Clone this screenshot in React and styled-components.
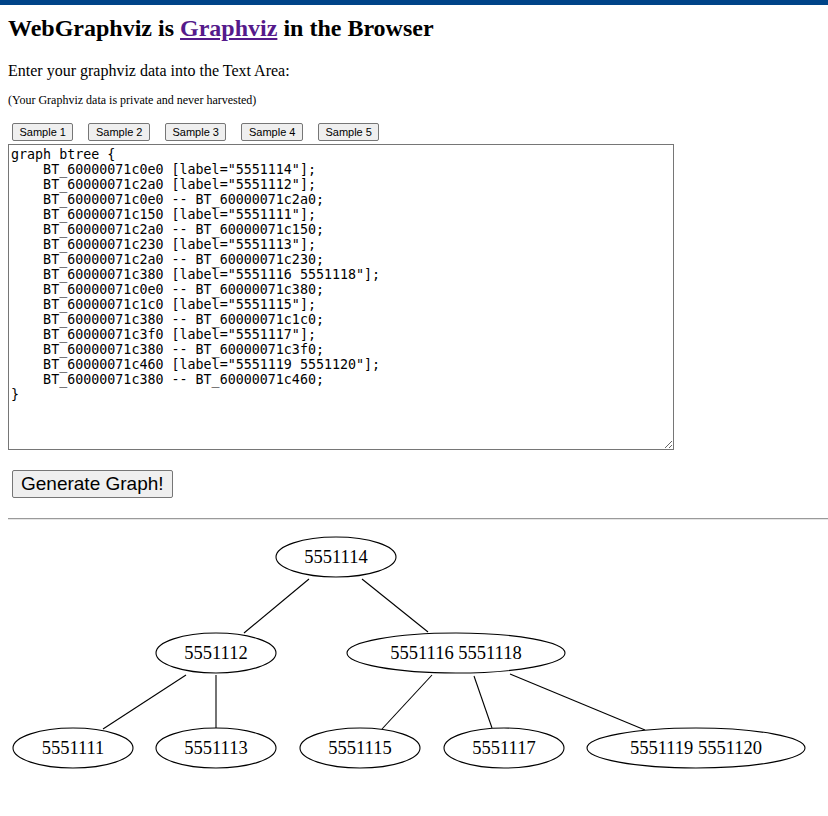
import React from "react";
import styled, { createGlobalStyle } from "styled-components";

const GlobalStyle = createGlobalStyle`
  html, body {
    margin: 0;
    padding: 0;
    background: #fff;
  }
  body {
    font-family: "Liberation Serif", "Times New Roman", serif;
    color: #000;
  }
`;

const graphSource = `graph btree {
    BT_60000071c0e0 [label="5551114"];
    BT_60000071c2a0 [label="5551112"];
    BT_60000071c0e0 -- BT_60000071c2a0;
    BT_60000071c150 [label="5551111"];
    BT_60000071c2a0 -- BT_60000071c150;
    BT_60000071c230 [label="5551113"];
    BT_60000071c2a0 -- BT_60000071c230;
    BT_60000071c380 [label="5551116 5551118"];
    BT_60000071c0e0 -- BT_60000071c380;
    BT_60000071c1c0 [label="5551115"];
    BT_60000071c380 -- BT_60000071c1c0;
    BT_60000071c3f0 [label="5551117"];
    BT_60000071c380 -- BT_60000071c3f0;
    BT_60000071c460 [label="5551119 5551120"];
    BT_60000071c380 -- BT_60000071c460;
}`;

// node centres in page coordinates, shifted into the svg below
const nodes = [
  { label: "5551114", x: 336, y: 557, rx: 60 },
  { label: "5551112", x: 216, y: 653, rx: 60 },
  { label: "5551116 5551118", x: 456, y: 653, rx: 109 },
  { label: "5551111", x: 73, y: 748, rx: 60 },
  { label: "5551113", x: 216, y: 748, rx: 60 },
  { label: "5551115", x: 360, y: 748, rx: 60 },
  { label: "5551117", x: 504, y: 748, rx: 60 },
  { label: "5551119 5551120", x: 696, y: 748, rx: 109 },
];

const edges = [
  [309, 579, 244, 633],
  [362, 579, 428, 632],
  [186, 675, 103, 729],
  [216, 675, 216, 728],
  [432, 675, 382, 729],
  [474, 676, 492, 728],
  [510, 674, 645, 730],
];

const Page = () => {
  return (
    <>
      <GlobalStyle />
      <TopBar />
      <Content>
        <Title>
          WebGraphviz is <TitleLink href="#">Graphviz</TitleLink> in the Browser
        </Title>
        <Intro>Enter your graphviz data into the Text Area:</Intro>
        <Note>(Your Graphviz data is private and never harvested)</Note>
        <SampleBar>
          {[1, 2, 3, 4, 5].map((n) => (
            <SampleButton key={n}>Sample {n}</SampleButton>
          ))}
        </SampleBar>
        <Editor defaultValue={graphSource} spellCheck={false} />
        <GenerateButton>Generate Graph!</GenerateButton>
        <Divider />
        <GraphCanvas width="820" height="286" viewBox="0 0 820 286">
          <g transform="translate(-8,-530)" fill="none" stroke="#000">
            {edges.map(([x1, y1, x2, y2], i) => (
              <line key={i} x1={x1} y1={y1} x2={x2} y2={y2} strokeWidth="1.1" />
            ))}
            {nodes.map((n) => (
              <g key={n.label}>
                <ellipse cx={n.x} cy={n.y} rx={n.rx} ry="20" fill="#fff" strokeWidth="1.1" />
                <NodeLabel x={n.x} y={n.y + 6} textAnchor="middle">
                  {n.label}
                </NodeLabel>
              </g>
            ))}
          </g>
        </GraphCanvas>
      </Content>
    </>
  );
};

const TopBar = styled.div`
  height: 5px;
  background: #004488;
`;

const Content = styled.div`
  display: flex;
  flex-direction: column;
  align-items: flex-start;
  padding: 0 0 0 8px;
`;

const Title = styled.h1`
  margin: 9px 0 0;
  font-size: 24px;
  line-height: 28px;
  font-weight: bold;
`;

const TitleLink = styled.a`
  color: #551a8b;
  text-decoration: underline;
`;

const Intro = styled.p`
  margin: 20px 0 0;
  font-size: 16px;
  line-height: 18px;
`;

const Note = styled.p`
  margin: 13px 0 0;
  font-size: 12px;
  line-height: 14px;
`;

const SampleBar = styled.div`
  display: flex;
  gap: 15px;
  margin-top: 16px;
  padding-left: 4px;
`;

const ButtonBase = styled.button`
  font-family: "Liberation Sans", Arial, sans-serif;
  color: #000;
  background: #efefef;
  border: 1px solid #767676;
  border-radius: 2px;
  margin: 0;
  cursor: pointer;
`;

const SampleButton = styled(ButtonBase)`
  height: 18px;
  padding: 0 6.5px;
  font-size: 11px;
  line-height: 14px;
`;

const Editor = styled.textarea`
  box-sizing: border-box;
  width: 666px;
  height: 306px;
  margin-top: 3px;
  padding: 2px;
  border: 1px solid #767676;
  font-family: "DejaVu Sans Mono", monospace;
  font-size: 13.333px;
  line-height: 15px;
  color: #000;
  resize: both;
  outline: none;
`;

const GenerateButton = styled(ButtonBase)`
  margin: 20px 0 0 4px;
  height: 28px;
  padding: 0 8px;
  font-size: 19px;
  line-height: 24px;
`;

const Divider = styled.hr`
  align-self: stretch;
  margin: 20px 0 0;
  border: none;
  border-top: 1px solid #9a9a9a;
  border-bottom: 1px solid #e6e6e6;
`;

const GraphCanvas = styled.svg`
  display: block;
  margin-top: 10px;
`;

const NodeLabel = styled.text`
  font-family: "Liberation Serif", "Times New Roman", serif;
  font-size: 18.5px;
  fill: #000;
  stroke: none;
`;

export default Page;
